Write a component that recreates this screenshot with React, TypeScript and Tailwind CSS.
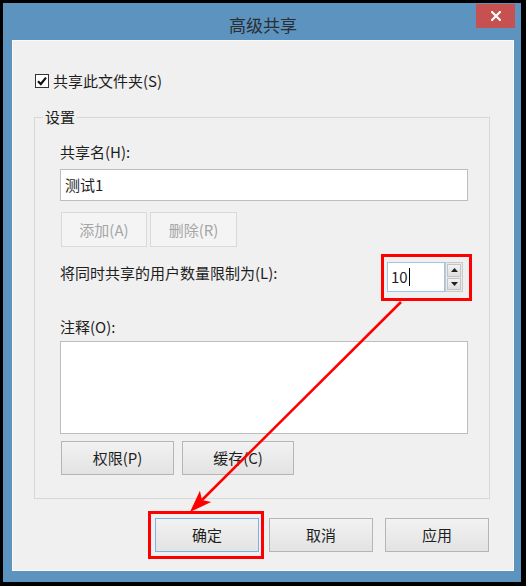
import React from "react";

const font = "font-['Noto_Sans_CJK_SC','Noto_Sans',sans-serif]";

function Btn({
  children,
  w,
  h = 34,
  disabled = false,
  primary = false,
}: {
  children: React.ReactNode;
  w: string;
  h?: number;
  disabled?: boolean;
  primary?: boolean;
}) {
  const base =
    "flex items-center justify-center text-[15px] leading-[20px] " + w + " ";
  const height = h === 35 ? "h-[35px]" : "h-[34px]";
  if (disabled) {
    return (
      <div className={base + height + " border border-[#d9d9d9] bg-[#f4f4f4] text-[#a6a6a6]"}>
        {children}
      </div>
    );
  }
  return (
    <div
      className={
        base +
        height +
        " bg-gradient-to-b from-[#f2f2f2] to-[#e3e3e3] text-[#1e1e1e] border " +
        (primary ? "border-[#7db1e4]" : "border-[#b5b5b5]")
      }
    >
      {children}
    </div>
  );
}

function Spinner() {
  return (
    <div className="flex h-[30px] w-[76px]">
      <div className="flex h-full w-[58px] items-center border border-[#9fc4e8] bg-white pl-[3px] text-[15px] leading-[20px] text-[#1e1e1e]">
        <span>10</span>
        <span className="ml-[1px] h-[18px] w-[1px] bg-black" />
      </div>
      <div className="flex h-full w-[18px] flex-col gap-[1px] border border-[#c9c9c9] bg-[#e9e9e9] p-[1px]">
        <div className="flex flex-1 items-center justify-center border border-[#c4c4c4] bg-gradient-to-b from-[#f2f2f2] to-[#dedede]">
          <svg width="7" height="4" viewBox="0 0 7 4">
            <polygon points="0,4 7,4 3.5,0" fill="#222" />
          </svg>
        </div>
        <div className="flex flex-1 items-center justify-center border border-[#c4c4c4] bg-gradient-to-b from-[#f2f2f2] to-[#dedede]">
          <svg width="7" height="4" viewBox="0 0 7 4">
            <polygon points="0,0 7,0 3.5,4" fill="#222" />
          </svg>
        </div>
      </div>
    </div>
  );
}

export default function App() {
  return (
    <div
      className={
        "relative h-[586px] w-[526px] bg-black pb-[4px] pl-[3px] pr-[5px] pt-[3px] text-[#1e1e1e] " +
        font
      }
    >
      {/* window frame */}
      <div className="flex h-full flex-col bg-[#5c93bf] pb-[11px] pl-[9px] pr-[7px]">
        {/* title bar */}
        <div className="grid h-[37px] grid-cols-[1fr_auto_1fr]">
          <div />
          <div className="mt-[12px] text-[17px] leading-[20px] text-[#2b2f33]">
            高级共享
          </div>
          <div className="flex justify-end">
            <div className="mr-[-1px] mt-[1px] flex h-[24px] w-[39px] items-center justify-center bg-[#c75050]">
              <svg width="10" height="10" viewBox="0 0 10 10">
                <path
                  d="M1 1 L9 9 M9 1 L1 9"
                  stroke="#fff"
                  strokeWidth="2.2"
                  strokeLinecap="square"
                />
              </svg>
            </div>
          </div>
        </div>

        {/* client area */}
        <div className="flex flex-1 flex-col border border-[#f9f9f9] bg-[#f0f0f0]">
          {/* share checkbox */}
          <div className="ml-[22px] mt-[30px] flex h-[20px] items-center">
            <div className="flex h-[14px] w-[14px] items-center justify-center border border-[#333] bg-white">
              <svg width="12" height="12" viewBox="0 0 12 12">
                <path
                  d="M2 6.2 L4.8 9 L10 2.6"
                  fill="none"
                  stroke="#111"
                  strokeWidth="2.2"
                />
              </svg>
            </div>
            <span className="ml-[4px] text-[15px] leading-[20px]">共享此文件夹(S)</span>
          </div>

          {/* settings group */}
          <fieldset className="ml-[21px] mt-[16px] w-[456px] border border-[#d8d8d8]">
            <legend className="ml-[8px] px-[2px] text-[15px] leading-[20px]">设置</legend>
            <div className="flex flex-col pb-[23px] pl-[25px] pr-[21px]">
              <div className="mt-[15px] text-[15px] leading-[20px]">共享名(H):</div>
              <div className="mt-[7px] flex h-[32px] items-center border border-[#bdbdbd] bg-white pl-[4px] text-[15px] leading-[20px]">
                测试1
              </div>
              <div className="mt-[11px] flex gap-[3px] pl-[1px]">
                <Btn w="w-[86px]" h={35} disabled>
                  添加(A)
                </Btn>
                <Btn w="w-[87px]" h={35} disabled>
                  删除(R)
                </Btn>
              </div>

              <div className="mr-[-4px] mt-[7px] flex items-start justify-between">
                <div className="mt-[9px] text-[15px] leading-[20px]">
                  将同时共享的用户数量限制为(L):
                </div>
                <div className="h-[47px] w-[91px] border-[3px] border-[#ff0000] pl-[3px] pt-[5px]">
                  <Spinner />
                </div>
              </div>

              <div className="mt-[16px] text-[15px] leading-[20px]">注释(O):</div>
              <div className="mt-[4px] h-[93px] border border-[#bdbdbd] bg-white" />
              <div className="mt-[7px] flex gap-[8px] pl-[1px]">
                <Btn w="w-[113px]">权限(P)</Btn>
                <Btn w="w-[112px]">缓存(C)</Btn>
              </div>
            </div>
          </fieldset>

          {/* dialog buttons */}
          <div className="mt-[12px] flex items-center justify-end pr-[24px]">
            <div className="flex h-[48px] w-[116px] items-center border-[3px] border-[#ff0000] pl-[4px]">
              <Btn w="w-[104px]" primary>
                确定
              </Btn>
            </div>
            <div className="ml-[5px]">
              <Btn w="w-[104px]">取消</Btn>
            </div>
            <div className="ml-[12px]">
              <Btn w="w-[104px]">应用</Btn>
            </div>
          </div>
        </div>
      </div>

      {/* callout arrow from the user limit field to the OK button */}
      <svg
        className="pointer-events-none absolute left-0 top-0"
        width="526"
        height="586"
        viewBox="0 0 526 586"
      >
        <line x1="401" y1="302" x2="202" y2="500" stroke="#ff0000" strokeWidth="2.6" />
        <polygon points="190,512 199.9,490.8 202,500 211.2,502.1" fill="#ff0000" />
      </svg>
    </div>
  );
}
